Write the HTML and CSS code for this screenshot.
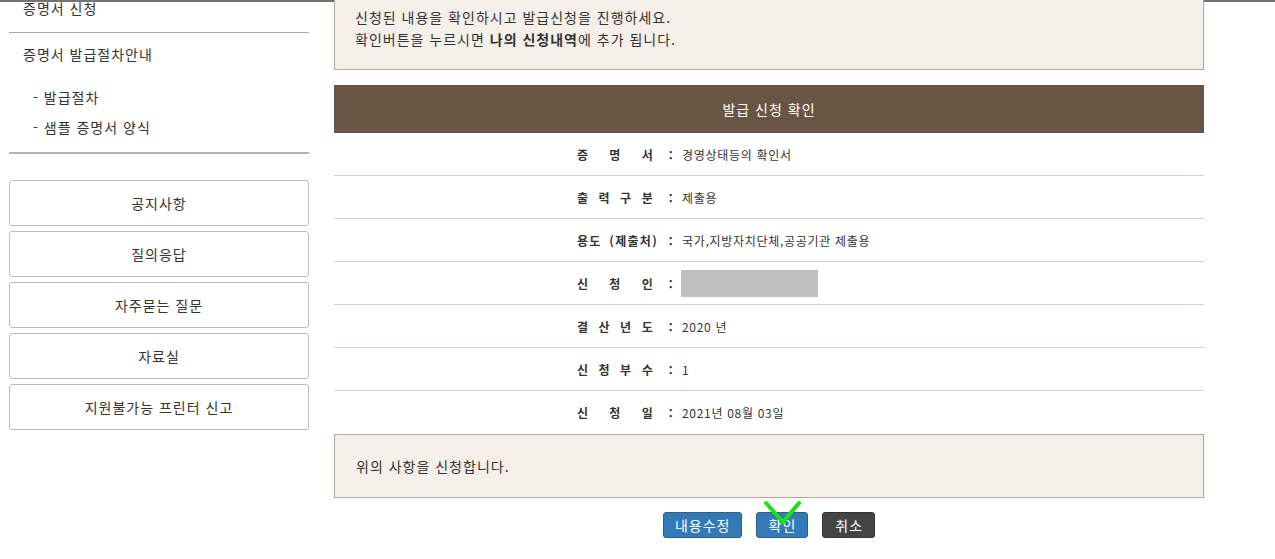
FILE: index.html
```html
<!DOCTYPE html>
<html lang="ko">
<head>
<meta charset="utf-8">
<title>발급 신청 확인</title>
<link rel="stylesheet" href="styles.css">
</head>
<body>
<div class="topline"></div>
<div class="page">
  <aside class="sidebar">
    <div class="side-head1">증명서 신청</div>
    <div class="side-head2">증명서 발급절차안내</div>
    <ul class="side-sub">
      <li>- 발급절차</li>
      <li>- 샘플 증명서 양식</li>
    </ul>
    <nav class="side-btns">
      <a class="side-btn">공지사항</a>
      <a class="side-btn">질의응답</a>
      <a class="side-btn">자주묻는 질문</a>
      <a class="side-btn">자료실</a>
      <a class="side-btn">지원불가능 프린터 신고</a>
    </nav>
  </aside>
  <main class="main">
    <div class="notice">
      <p>신청된 내용을 확인하시고 발급신청을 진행하세요.</p>
      <p>확인버튼을 누르시면 <b>나의 신청내역</b>에 추가 됩니다.</p>
    </div>
    <div class="bar">발급 신청 확인</div>
    <div class="rows">
      <div class="row"><span class="label spread"><i>증</i><i>명</i><i>서</i></span><span class="colon">:</span><span class="value">경영상태등의 확인서</span></div>
      <div class="row"><span class="label spread"><i>출</i><i>력</i><i>구</i><i>분</i></span><span class="colon">:</span><span class="value">제출용</span></div>
      <div class="row"><span class="label wide">용도 (제출처)</span><span class="colon">:</span><span class="value">국가,지방자치단체,공공기관 제출용</span></div>
      <div class="row"><span class="label spread"><i>신</i><i>청</i><i>인</i></span><span class="colon">:</span><span class="value"><span class="redact"></span></span></div>
      <div class="row"><span class="label spread"><i>결</i><i>산</i><i>년</i><i>도</i></span><span class="colon">:</span><span class="value">2020 년</span></div>
      <div class="row"><span class="label spread"><i>신</i><i>청</i><i>부</i><i>수</i></span><span class="colon">:</span><span class="value">1</span></div>
      <div class="row last"><span class="label spread"><i>신</i><i>청</i><i>일</i></span><span class="colon">:</span><span class="value">2021년 08월 03일</span></div>
    </div>
    <div class="confirm-box">위의 사항을 신청합니다.</div>
    <div class="actions">
      <button class="btn btn-blue btn-edit">내용수정</button>
      <button class="btn btn-blue btn-ok">확인<svg class="check" width="44" height="30" viewBox="0 0 44 30"><polyline points="4,3 21,22 37,3" fill="none" stroke="#14e614" stroke-width="4" stroke-linecap="round" stroke-linejoin="round"/></svg></button>
      <button class="btn btn-dark">취소</button>
    </div>
  </main>
</div>
</body>
</html>
```

FILE: styles.css
```css
* { box-sizing: border-box; }
html, body { margin: 0; padding: 0; background: #fff; }
body {
  font-family: "Noto Sans CJK KR", "Noto Sans", sans-serif;
  font-size: 14px;
  letter-spacing: 1px;
  color: #333;
}
.topline { height: 2px; background: #737373; }
.page { display: flex; align-items: flex-start; }

.sidebar { width: 300px; margin-left: 9px; }
.side-head1 {
  line-height: 16px;
  padding: 0 14px 16px;
  border-bottom: 1px solid #aaa;
  margin-top: -2px;
}
.side-head2 { line-height: 20px; padding: 11px 14px 0; }
.side-sub {
  list-style: none;
  margin: 23px 0 0;
  padding: 0 0 15px 24px;
  border-bottom: 2px solid #b4b4b4;
  display: flex;
  flex-direction: column;
  gap: 10px;
}
.side-sub li { line-height: 20px; }
.side-btns { margin-top: 26px; display: flex; flex-direction: column; gap: 5px; }
.side-btn {
  display: flex;
  align-items: center;
  justify-content: center;
  height: 46px;
  border: 1px solid #bcbcbc;
  border-radius: 3px;
  color: #333;
}

.main { width: 870px; margin-left: 25px; }
.notice {
  background: #f4efe9;
  border: 1px solid #b9a594;
  border-top: none;
  margin-top: -2px;
  padding: 6px 20px 19px;
}
.notice p { margin: 0; line-height: 22px; }
.notice b { font-weight: bold; }

.bar {
  margin-top: 15px;
  height: 48px;
  line-height: 48px;
  background: #685544;
  color: #fff;
  text-align: center;
}
.row {
  display: flex;
  align-items: center;
  height: 43px;
  padding-left: 243px;
  border-bottom: 1px solid #d9cfc4;
  font-size: 12px;
  letter-spacing: 0.7px;
}
.row.last { border-bottom: none; }
.label { width: 89px; flex: none; font-weight: bold; white-space: nowrap; letter-spacing: 0.3px; }
.label.wide { letter-spacing: 1.3px; word-spacing: 3px; }
.label.spread { display: flex; justify-content: space-between; width: 76px; margin-right: 13px; }
.label i { font-style: normal; }
.colon { width: 10px; flex: none; text-align: center; font-weight: bold; }
.value { margin-left: 6px; display: flex; align-items: center; }
.redact { display: block; width: 137px; height: 27px; background: #bfbfbf; margin-left: -1px; }

.confirm-box {
  background: #f4efe9;
  border: 1px solid #b9a594;
  height: 64px;
  padding-left: 21px;
  display: flex;
  align-items: center;
}

.actions {
  margin-top: 14px;
  display: flex;
  justify-content: center;
  gap: 14px;
}
.btn {
  position: relative;
  font-family: inherit;
  font-size: 14px;
  letter-spacing: 1px;
  color: #fff;
  height: 26px;
  line-height: 24px;
  padding: 0 11px 0 12px;
  border-radius: 3px;
  cursor: pointer;
}
.btn-blue { background: #337ab7; border: 1px solid #2e5f8a; }
.btn-edit { padding: 0 10px 0 11px; }
.btn-dark { background: #444; border: 1px solid #333; }
.check { position: absolute; left: 5px; top: -13px; pointer-events: none; }
```
